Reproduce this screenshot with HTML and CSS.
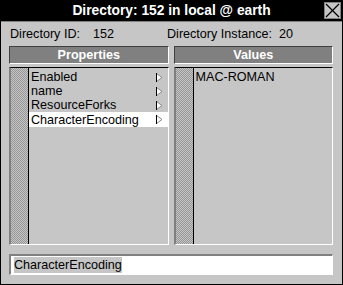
FILE: index.html
```html
<!DOCTYPE html>
<html lang="en">
<head>
  <meta charset="UTF-8">
  <title>Directory: 152 in local @ earth</title>
  <link rel="stylesheet" href="styles.css">
</head>
<body>

<div class="window">
  <div class="titlebar">
    <span></span>
    <span class="title">Directory: 152 in local @ earth</span>
    <span class="close">
      <svg width="15" height="15" viewBox="0 0 15 15">
        <line x1="1" y1="1" x2="14" y2="14" stroke="#000" stroke-width="1.2"/>
        <line x1="14" y1="1" x2="1" y2="14" stroke="#000" stroke-width="1.2"/>
      </svg>
    </span>
  </div>

  <div class="info">
    <span class="id-label">Directory ID:</span><span class="id-val">152</span>
    <span class="inst-label">Directory Instance:</span><span class="inst-val">20</span>
  </div>

  <div class="columns">
    <div class="col">
      <div class="header">Properties</div>
      <div class="list">
        <div class="stripe"></div>
        <ul class="items" id="props"></ul>
      </div>
    </div>
    <div class="col">
      <div class="header">Values</div>
      <div class="list">
        <div class="stripe"></div>
        <ul class="items">
          <li>MAC-ROMAN</li>
        </ul>
      </div>
    </div>
  </div>

  <div class="entry"><span class="sel">CharacterEncoding</span></div>
</div>

<script>
  // Fill the property list
  const props = ["Enabled", "name", "ResourceForks", "CharacterEncoding"];
  const list = document.getElementById("props");
  props.forEach((p, i) => {
    const li = document.createElement("li");
    if (i === props.length - 1) li.className = "selected";
    li.innerHTML = `<span>${p}</span><svg class="arrow" width="7" height="9" viewBox="0 0 7 9"><path d="M0.5 0.5 L6 4.5 L0.5 8.5 Z" fill="#fff" stroke="#888"/><line x1="0.5" y1="0" x2="0.5" y2="9" stroke="#000"/></svg>`;
    list.appendChild(li);
  });
</script>

</body>
</html>
```

FILE: styles.css
```css
/* Window chrome */
* { box-sizing: border-box; margin: 0; padding: 0; }
body { font-family: "Liberation Sans", Arial, sans-serif; font-size: 12.6px; color: #000; background: #c6c6c6; }
.window { width: 343px; height: 285px; background: #c6c6c6; border: 1px solid #000; border-top: none; display: flex; flex-direction: column; }
.titlebar { height: 22px; background: #000; border-bottom: 1px solid #808080; display: grid; grid-template-columns: 24px 1fr 24px; align-items: center; }
.title { color: #fff; font-weight: bold; font-size: 13.8px; text-align: center; }
.close { width: 17px; height: 17px; background: #c6c6c6; border: 1px solid #808080; justify-self: end; margin-right: 1px; display: flex; align-items: center; justify-content: center; }

/* Info row */
.info { height: 24px; display: flex; align-items: center; padding-left: 9px; }
.id-val { margin-left: 13px; width: 74px; }
.inst-val { margin-left: 7px; }

/* Lists */
.columns { display: flex; gap: 5px; padding: 0 9px 0 8px; }
.col { flex: 1; display: flex; flex-direction: column; }
.header { height: 18px; background: #808080; color: #fff; font-weight: bold; font-size: 12.6px; text-align: center; line-height: 16px; border: 1px solid #404040; border-right-color: #fff; border-bottom-color: #fff; margin-bottom: 3px; }
.list { height: 178px; display: flex; border: 2px solid #000; border-right: 1px solid #fff; border-bottom: 1px solid #fff; border-top-width: 1px; border-left-color: #808080; border-top-color: #000; }
.stripe { width: 18px; background: repeating-conic-gradient(#969696 0 25%, #c6c6c6 0 50%) 0 0 / 2px 2px; border-right: 1px solid #000; }
.items { list-style: none; flex: 1; padding-top: 2px; }
.items li { height: 14px; line-height: 14px; padding-left: 2px; padding-right: 5px; display: flex; justify-content: space-between; align-items: center; }
.items li.selected { background: #fff; height: 15px; }
.arrow { display: block; }

/* Text entry */
.entry { margin: 9px 9px 0 8px; height: 21px; background: #fff; border: 2px solid #808080; border-right: 1px solid #fff; border-bottom: 1px solid #fff; padding: 1px 0 0 3px; line-height: 16px; }
.sel { background: #c6c6c6; display: inline-block; }
```
